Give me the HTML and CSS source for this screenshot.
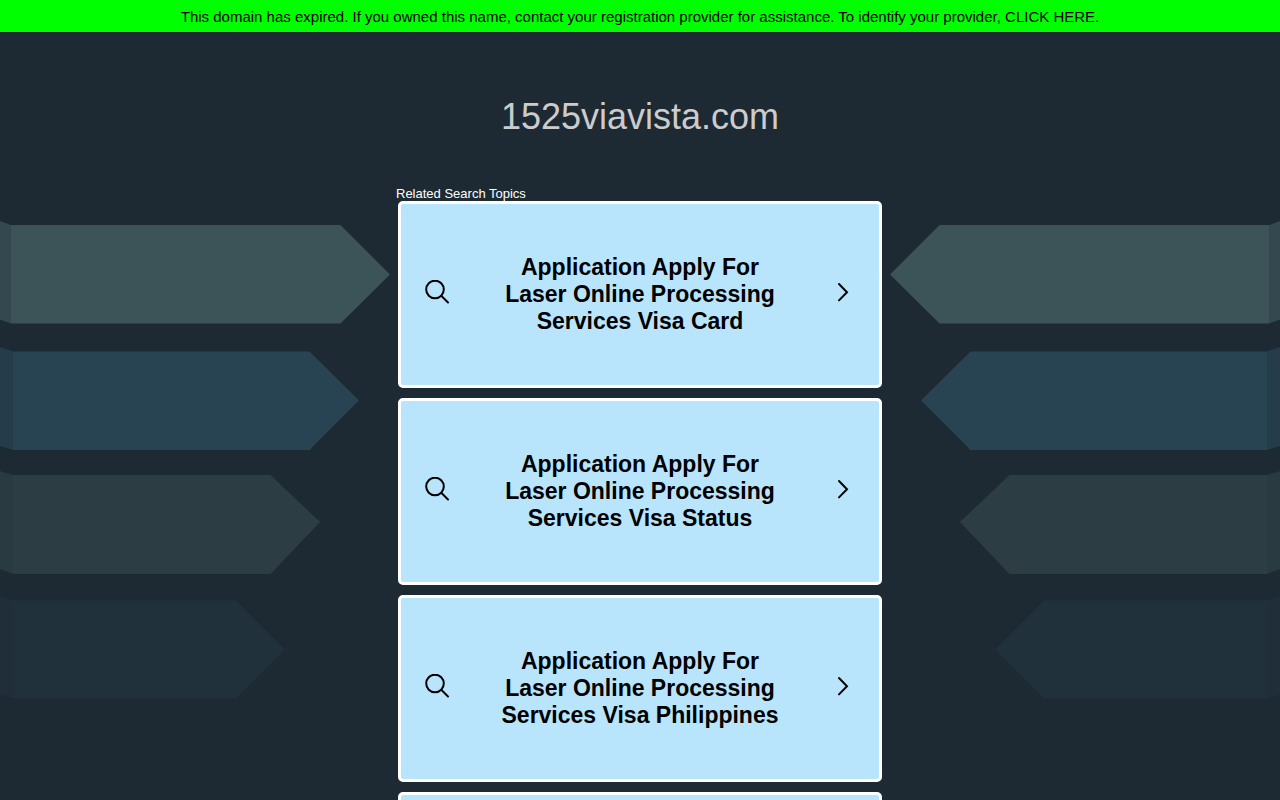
FILE: index.html
```
<!DOCTYPE html>
<html lang="en">

<head>
    <meta charset="UTF-8">
    <meta name="viewport" content="width=device-width, initial-scale=1.0">
    <title>1525viavista.com</title>
    <link rel="stylesheet" href="styles.css">
</head>

<body>

    <!-- Shared icons -->
    <svg class="sprite" aria-hidden="true">
        <symbol id="search" viewBox="0 0 30 30">
            <circle cx="13" cy="9.5" r="8.8" />
            <path d="M19.5 16L26 22.5" />
        </symbol>
        <symbol id="chevron" viewBox="0 0 30 30">
            <path d="M11 4L19 12.2L11 20.4" />
        </symbol>
        <symbol id="arrows" viewBox="0 0 390 490">
            <path fill="#34494f" d="M0 11L11 15V113.5L0 109.5Z" />
            <path fill="#3c5357" d="M11 15H340.5L390 64.5L340.5 113.5H11Z" />
            <path fill="#253c4a" d="M0 137L13 141.5V240L0 236Z" />
            <path fill="#284452" d="M13 141.5H309.5L359 190.5L309.5 240H13Z" />
            <path fill="#293a41" d="M0 261L13 265V364L0 359Z" />
            <path fill="#2c3e43" d="M13 265H270.5L320 312L270.5 364H13Z" />
            <path fill="#1f2e39" d="M0 386L13 390.5V488.5L0 484.5Z" />
            <path fill="#20313c" d="M13 390.5H236L285 439.5L236 488.5H13Z" />
        </symbol>
    </svg>

    <!-- Expired notice -->
    <div class="banner">
        This domain has expired. If you owned this name, contact your registration provider for assistance. To identify your provider, <a href="#">CLICK HERE</a>.
    </div>

    <header>
        <h1>1525viavista.com</h1>
    </header>

    <div class="container">
        <svg class="arrows" aria-hidden="true"><use href="#arrows" /></svg>

        <main>
            <h2>Related Search Topics</h2>
            <nav class="topics">
                <a class="topic" href="#">
                    <svg class="icon" aria-hidden="true"><use href="#search" /></svg>
                    <span class="topic-text">Application Apply For Laser Online Processing Services Visa Card</span>
                    <svg class="icon" aria-hidden="true"><use href="#chevron" /></svg>
                </a>
                <a class="topic" href="#">
                    <svg class="icon" aria-hidden="true"><use href="#search" /></svg>
                    <span class="topic-text">Application Apply For Laser Online Processing Services Visa Status</span>
                    <svg class="icon" aria-hidden="true"><use href="#chevron" /></svg>
                </a>
                <a class="topic" href="#">
                    <svg class="icon" aria-hidden="true"><use href="#search" /></svg>
                    <span class="topic-text">Application Apply For Laser Online Processing Services Visa Philippines</span>
                    <svg class="icon" aria-hidden="true"><use href="#chevron" /></svg>
                </a>
                <a class="topic" href="#">
                    <svg class="icon" aria-hidden="true"><use href="#search" /></svg>
                    <span class="topic-text">Application Apply For Laser Online Processing Services Visa</span>
                    <svg class="icon" aria-hidden="true"><use href="#chevron" /></svg>
                </a>
            </nav>
        </main>

        <svg class="arrows arrows-right" aria-hidden="true"><use href="#arrows" /></svg>
    </div>

</body>

</html>
```
FILE: styles.css
```
body {
    font-family: "Liberation Sans", Arial, sans-serif;
    background-color: #1e2a33;
    margin: 0;
}

.sprite {
    display: none;
}

/* Expired notice */
.banner {
    background-color: #00ff00;
    color: #000;
    padding: 9px 8px 7px;
    font-size: 15px;
    line-height: 16px;
    text-align: center;
}

.banner a {
    color: inherit;
    text-decoration: none;
}

/* Domain name */
header {
    padding: 64px 20px 48px;
    text-align: center;
}

header h1 {
    margin: 0;
    color: #ccc;
    font-size: 36px;
    font-weight: normal;
    line-height: 42px;
}

/* Arrows on both sides of the topics */
.container {
    display: grid;
    grid-template-columns: 1fr minmax(auto, 488px) 1fr;
    align-items: start;
}

.arrows {
    width: 390px;
    height: 490px;
    margin-top: 24px;
}

.arrows-right {
    justify-self: end;
    transform: scaleX(-1);
}

/* Topics */
h2 {
    margin: 0;
    color: #fff;
    font-size: 13px;
    font-weight: normal;
    line-height: 15px;
}

.topics {
    display: flex;
    flex-direction: column;
    gap: 10px;
    padding: 0 2px 10px;
}

.topic {
    display: flex;
    align-items: center;
    padding: 50px 21px;
    border: 3px solid #fff;
    border-radius: 5px;
    background-color: #b8e5fc;
    color: #000;
    text-decoration: none;
}

.topic:hover {
    background-color: #d2effd;
}

.topic-text {
    flex: 1;
    padding: 0 44px;
    font-size: 23px;
    font-weight: bold;
    line-height: 27px;
    text-align: center;
}

.icon {
    flex-shrink: 0;
    width: 30px;
    height: 30px;
    fill: none;
    stroke: #000;
    stroke-width: 2;
    stroke-linecap: round;
}
```
